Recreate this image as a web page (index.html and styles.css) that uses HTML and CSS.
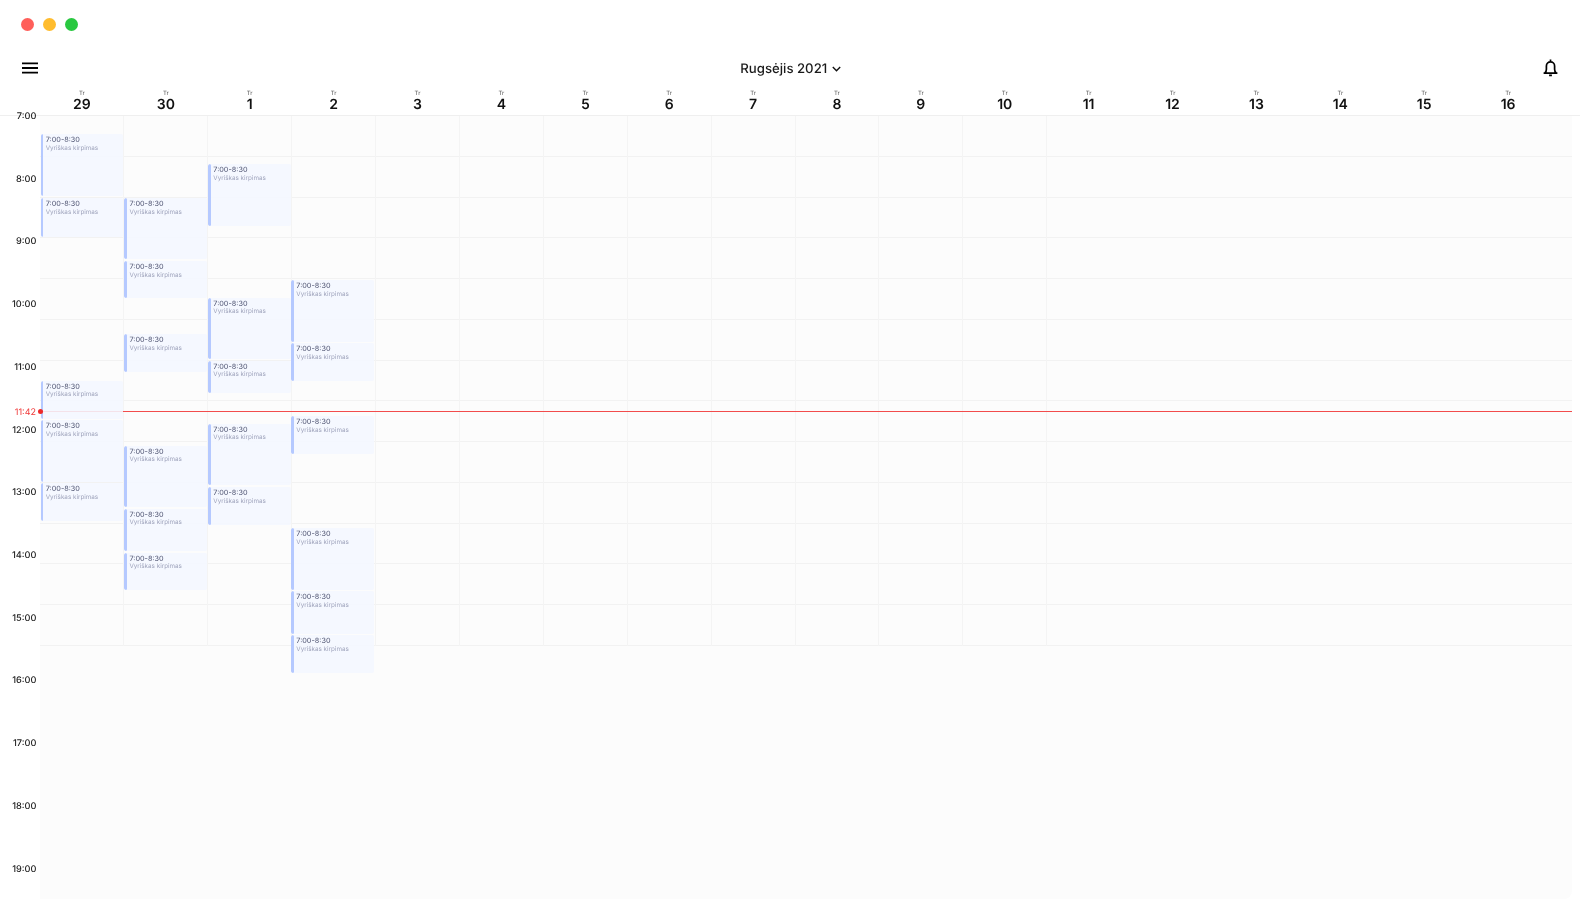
FILE: index.html
```html
<!DOCTYPE html>
<html lang="lt">
<head>
<meta charset="utf-8">
<title>Kalendorius</title>
<link rel="stylesheet" href="styles.css">
</head>
<body>
<div class="window">
  <div class="titlebar"><span class="light red"></span><span class="light yellow"></span><span class="light green"></span></div>
  <header class="toolbar">
    <svg class="menu" width="16" height="12" viewBox="0 0 16 12"><path d="M0 1.4h16M0 6h16M0 10.6h16" fill="none" stroke="#000" stroke-width="1.8"/></svg>
    <div class="month">Rugsėjis 2021<svg class="chev" width="9" height="6" viewBox="0 0 9 6"><path d="M.8 1 4.5 4.7 8.2 1" fill="none" stroke="#111" stroke-width="1.4"/></svg></div>
    <svg class="bell" width="15" height="18" viewBox="0 0 15 18"><path d="M.6 14.2h13.8M1.8 14.2c1.1-1.1 1.6-2.3 1.6-4V6.9a4.1 4.1 0 0 1 8.2 0v3.3c0 1.7.5 2.9 1.6 4M7.5.5v2.4M6.1 16.4h2.8" fill="none" stroke="#000" stroke-width="1.7"/></svg>
  </header>
  <div class="dayhead">
    <div class="day"><small>Tr</small><b>29</b></div>
    <div class="day"><small>Tr</small><b>30</b></div>
    <div class="day"><small>Tr</small><b>1</b></div>
    <div class="day"><small>Tr</small><b>2</b></div>
    <div class="day"><small>Tr</small><b>3</b></div>
    <div class="day"><small>Tr</small><b>4</b></div>
    <div class="day"><small>Tr</small><b>5</b></div>
    <div class="day"><small>Tr</small><b>6</b></div>
    <div class="day"><small>Tr</small><b>7</b></div>
    <div class="day"><small>Tr</small><b>8</b></div>
    <div class="day"><small>Tr</small><b>9</b></div>
    <div class="day"><small>Tr</small><b>10</b></div>
    <div class="day"><small>Tr</small><b>11</b></div>
    <div class="day"><small>Tr</small><b>12</b></div>
    <div class="day"><small>Tr</small><b>13</b></div>
    <div class="day"><small>Tr</small><b>14</b></div>
    <div class="day"><small>Tr</small><b>15</b></div>
    <div class="day"><small>Tr</small><b>16</b></div>
  </div>
  <div class="main">
    <div class="hours">
      <div class="hour">7:00</div><div class="hour">8:00</div><div class="hour">9:00</div><div class="hour">10:00</div>
      <div class="hour">11:00</div><div class="hour">12:00</div><div class="hour">13:00</div><div class="hour">14:00</div>
      <div class="hour">15:00</div><div class="hour">16:00</div><div class="hour">17:00</div><div class="hour">18:00</div>
      <div class="hour">19:00</div>
    </div>
    <div class="canvas">
      <div class="rows">
        <div class="row"></div><div class="row"></div><div class="row"></div><div class="row"></div><div class="row"></div>
        <div class="row"></div><div class="row"></div><div class="row"></div><div class="row"></div><div class="row"></div>
        <div class="row"></div><div class="row"></div><div class="row"></div>
      </div>
      <div class="nowline"></div>
      <div class="cols">
        <div class="col">
          <div class="event" style="top:18px;height:62px"><p class="t">7:00-8:30</p><p class="s">Vyriškas kirpimas</p></div>
          <div class="event" style="top:82px;height:38.7px"><p class="t">7:00-8:30</p><p class="s">Vyriškas kirpimas</p></div>
          <div class="event" style="top:264.7px;height:38px"><p class="t">7:00-8:30</p><p class="s">Vyriškas kirpimas</p></div>
          <div class="event" style="top:304px;height:61.7px"><p class="t">7:00-8:30</p><p class="s">Vyriškas kirpimas</p></div>
          <div class="event" style="top:367.3px;height:38px"><p class="t">7:00-8:30</p><p class="s">Vyriškas kirpimas</p></div>
        </div>
        <div class="col">
          <div class="event" style="top:82px;height:61.3px"><p class="t">7:00-8:30</p><p class="s">Vyriškas kirpimas</p></div>
          <div class="event" style="top:145px;height:37.3px"><p class="t">7:00-8:30</p><p class="s">Vyriškas kirpimas</p></div>
          <div class="event" style="top:218px;height:37.7px"><p class="t">7:00-8:30</p><p class="s">Vyriškas kirpimas</p></div>
          <div class="event" style="top:329.7px;height:61px"><p class="t">7:00-8:30</p><p class="s">Vyriškas kirpimas</p></div>
          <div class="event" style="top:392.5px;height:42.2px"><p class="t">7:00-8:30</p><p class="s">Vyriškas kirpimas</p></div>
          <div class="event" style="top:436.7px;height:37.3px"><p class="t">7:00-8:30</p><p class="s">Vyriškas kirpimas</p></div>
        </div>
        <div class="col">
          <div class="event" style="top:48px;height:61.7px"><p class="t">7:00-8:30</p><p class="s">Vyriškas kirpimas</p></div>
          <div class="event" style="top:181.7px;height:61.3px"><p class="t">7:00-8:30</p><p class="s">Vyriškas kirpimas</p></div>
          <div class="event" style="top:244.7px;height:32.3px"><p class="t">7:00-8:30</p><p class="s">Vyriškas kirpimas</p></div>
          <div class="event" style="top:307.7px;height:61.3px"><p class="t">7:00-8:30</p><p class="s">Vyriškas kirpimas</p></div>
          <div class="event" style="top:371px;height:38px"><p class="t">7:00-8:30</p><p class="s">Vyriškas kirpimas</p></div>
        </div>
        <div class="col">
          <div class="event" style="top:164.3px;height:61.7px"><p class="t">7:00-8:30</p><p class="s">Vyriškas kirpimas</p></div>
          <div class="event" style="top:227.3px;height:37.4px"><p class="t">7:00-8:30</p><p class="s">Vyriškas kirpimas</p></div>
          <div class="event" style="top:300px;height:38px"><p class="t">7:00-8:30</p><p class="s">Vyriškas kirpimas</p></div>
          <div class="event" style="top:412px;height:62px"><p class="t">7:00-8:30</p><p class="s">Vyriškas kirpimas</p></div>
          <div class="event" style="top:475px;height:42.7px"><p class="t">7:00-8:30</p><p class="s">Vyriškas kirpimas</p></div>
          <div class="event" style="top:519px;height:37.7px"><p class="t">7:00-8:30</p><p class="s">Vyriškas kirpimas</p></div>
        </div>
        <div class="col"></div><div class="col"></div><div class="col"></div><div class="col"></div>
        <div class="col"></div><div class="col"></div><div class="col"></div><div class="col"></div>
      </div>
      <div class="nowlabel">11:42</div>
      <div class="nowdot"></div>
    </div>
  </div>
</div>
</body>
</html>
```
FILE: styles.css
```css
* { box-sizing: border-box; }
html, body { margin: 0; height: 100%; background: #fff; overflow: hidden; }
body { font-family: Inter, "Liberation Sans", sans-serif; color: #111; text-rendering: geometricPrecision; }
.window { display: flex; flex-direction: column; width: 1580px; height: 907px; will-change: opacity; }

.titlebar { display: flex; gap: 9px; align-items: center; height: 48px; padding-left: 21px; flex: none; }
.light { width: 13px; height: 13px; border-radius: 50%; }
.red { background: #ff5f5a; }
.yellow { background: #ffbc2e; }
.green { background: #29c840; }

.toolbar { display: flex; align-items: center; justify-content: space-between; height: 40px; padding: 0 21.5px 0 22px; flex: none; }
.month { display: flex; align-items: center; gap: 5px; font-size: 13.2px; line-height: 20px; padding-top: 1px; font-weight: 500; color: #1a1a1a; }
.chev { margin-top: 1px; }

.dayhead { display: flex; height: 28px; padding-left: 40px; flex: none; border-bottom: 1px solid #efefef; }
.day { width: 83.9px; display: flex; flex-direction: column; align-items: center; }
.day small { font-size: 6px; line-height: 8px; margin-top: 2px; color: #555; }
.day b { font-size: 14px; line-height: 15px; margin-top: -1px; font-weight: 600; color: #111; }

.main { display: flex; flex: 1; min-height: 0; padding-bottom: 8px; padding-right: 8px; }
.hours { width: 40px; flex: none; margin-top: -6px; }
.hour { height: 62.72px; line-height: 14px; padding-right: 3.6px; text-align: right; font-size: 9.2px; font-weight: 500; color: #222; }

.canvas { position: relative; flex: 1; background: #fcfcfc; border-bottom-right-radius: 8px; isolation: isolate; }
.row { height: 40.77px; border-bottom: 1px solid #f2f2f2; }
.nowline { position: absolute; z-index: 1; left: 0; right: 0; top: 295px; height: 1px; background: #f24c4c; }
.cols { position: absolute; left: 0; top: 0; display: flex; height: 529.5px; }
.col { position: relative; width: 83.9px; }
.col:nth-child(-n+12)::after { content: ""; position: absolute; top: 0; bottom: 0; right: -.5px; width: 1px; background: #f4f4f4; }
.event { position: absolute; z-index: 2; left: .5px; width: 82.4px; padding-left: 5px; border-radius: 2px; background: rgba(244, 247, 255, .88); overflow: hidden; }
.col:first-child .event { left: .7px; }
.col:nth-child(4) .event { left: -.4px; }
.event::before { content: ""; position: absolute; left: 0; top: 0; bottom: 0; width: 2.4px; border-radius: 2px; background: #b5c9ff; }
.event p { margin: 0; white-space: nowrap; }
.event .t { font-size: 7.3px; line-height: 9px; margin-top: 1px; color: #4d5270; }
.event .s { font-size: 6.3px; line-height: 7.5px; margin-top: .5px; color: #a0a5bd; }
.nowlabel { position: absolute; z-index: 3; left: -40px; top: 290px; width: 36px; line-height: 14px; text-align: right; font-size: 9px; color: #f03a3a; }
.nowdot { position: absolute; z-index: 3; left: -2px; top: 293px; width: 5px; height: 5px; border-radius: 50%; background: #ee2a2a; }
```
